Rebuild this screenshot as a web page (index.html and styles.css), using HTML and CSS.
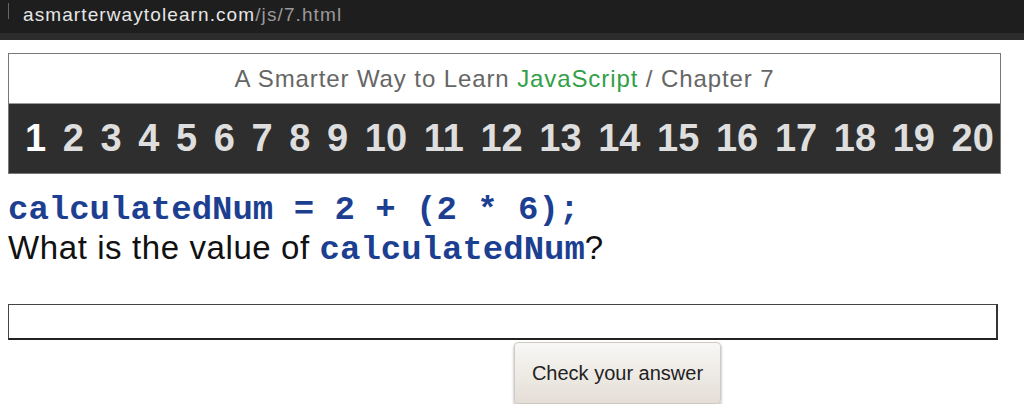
FILE: index.html
```html
<!DOCTYPE html>
<html lang="en">
<head>
    <meta charset="UTF-8">
    <meta name="viewport" content="width=device-width, initial-scale=1.0">
    <title>A Smarter Way to Learn JavaScript - Chapter 7</title>
    <link rel="stylesheet" href="styles.css">
</head>
<body>
    <div class="url-bar">
        <span class="url-sep"></span>
        <span class="url">asmarterwaytolearn.com<span class="url-path">/js/7.html</span></span>
    </div>

    <div class="page">
        <div class="header">
            <div class="title">
                A Smarter Way to Learn <span class="green">JavaScript</span> / Chapter 7
            </div>
            <div class="chapters">
                <a href="#" class="first">1</a>
                <a href="#">2</a>
                <a href="#">3</a>
                <a href="#">4</a>
                <a href="#">5</a>
                <a href="#">6</a>
                <a href="#">7</a>
                <a href="#">8</a>
                <a href="#">9</a>
                <a href="#">10</a>
                <a href="#">11</a>
                <a href="#">12</a>
                <a href="#">13</a>
                <a href="#">14</a>
                <a href="#">15</a>
                <a href="#">16</a>
                <a href="#">17</a>
                <a href="#">18</a>
                <a href="#">19</a>
                <a href="#">20</a>
            </div>
        </div>

        <div class="question">
            <div class="code">calculatedNum = 2 + (2 * 6);</div>
            <div class="ask">What is the value of <span class="code">calculatedNum</span>?</div>
        </div>

        <input type="text" class="answer" id="answer">
        <button class="check" onclick="checkAnswer()">Check your answer</button>
    </div>

    <script>
        function checkAnswer() {
            var val = document.getElementById('answer').value.trim();
            alert(val === '14' ? 'Correct!' : 'Try again.');
        }
    </script>
</body>
</html>
```

FILE: styles.css
```css
body {
    margin: 0;
    font-family: "Liberation Sans", Arial, sans-serif;
    background: #fff;
}
.url-bar {
    height: 33px;
    background: #1e1e1e;
    border-bottom: 7px solid #2c2c2c;
    display: flex;
    align-items: center;
}
.url-sep {
    width: 1px;
    height: 16px;
    background: #666;
    margin: 0 14px 0 8px;
    align-self: flex-start;
    margin-top: 3px;
}
.url {
    color: #e6e6e6;
    font-size: 19px;
    letter-spacing: 1.1px;
    margin-top: -4px;
}
.url-path {
    color: #9a9a9a;
}
.page {
    padding: 13px 8px 0 8px;
}
.header {
    width: 991px;
    border: 1px solid #777;
}
.title {
    height: 49px;
    line-height: 49px;
    text-align: center;
    font-size: 24px;
    letter-spacing: 0.9px;
    color: #666;
    border-bottom: 1px solid #999;
}
.green {
    color: #31a046;
}
.chapters {
    height: 69px;
    background: #2e2e2e;
    display: flex;
    justify-content: space-between;
    align-items: center;
    padding: 0 6px 0 16px;
}
.chapters a {
    color: #dedede;
    font-weight: bold;
    font-size: 38px;
    text-decoration: none;
}
.chapters a.first {
    color: #fff;
}
.question {
    margin-top: 18px;
    font-size: 33px;
    line-height: 37px;
    letter-spacing: 0.6px;
    color: #111;
}
.code {
    font-family: "Liberation Mono", "Courier New", monospace;
    font-weight: bold;
    font-size: 34px;
    letter-spacing: 0;
    color: #1d3f91;
}
.answer {
    display: block;
    width: 990px;
    height: 36px;
    box-sizing: border-box;
    margin-top: 35px;
    border: 1px solid #444;
    border-bottom: 2px solid #222;
    border-right: 2px solid #333;
    font-size: 20px;
}
.check {
    display: block;
    margin: 2px 0 0 506px;
    width: 207px;
    height: 62px;
    font-family: "Liberation Sans", Arial, sans-serif;
    font-size: 20px;
    color: #222;
    background: linear-gradient(#f8f7f5, #e4ded6);
    border: 1px solid #cfcac3;
    border-radius: 4px;
    box-shadow: 0 2px 3px rgba(0, 0, 0, 0.35);
    cursor: pointer;
}
```
